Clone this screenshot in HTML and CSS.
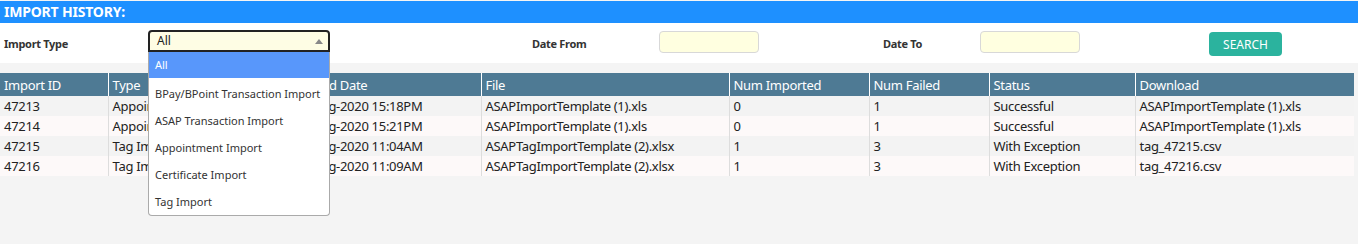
FILE: index.html
```html
<!DOCTYPE html>
<html lang="en">
<head>
  <meta charset="UTF-8">
  <meta name="viewport" content="width=device-width, initial-scale=1.0" />
  <title>Import History</title>
  <link rel="stylesheet" href="styles.css">
</head>
<body>
  <div class="panel-title">IMPORT HISTORY:</div>

  <div class="filters">
    <label class="lbl lbl-type">Import Type</label>
    <div class="select-wrap">
      <div class="select-box">
        <span>All</span>
        <span class="arrow"></span>
      </div>
      <ul class="select-list">
        <li class="active">All</li>
        <li>BPay/BPoint Transaction Import</li>
        <li>ASAP Transaction Import</li>
        <li>Appointment Import</li>
        <li>Certificate Import</li>
        <li>Tag Import</li>
      </ul>
    </div>
    <label class="lbl lbl-from">Date From</label>
    <input class="date date-from" type="text">
    <label class="lbl lbl-to">Date To</label>
    <input class="date date-to" type="text">
    <button class="btn-search">SEARCH</button>
  </div>

  <table class="history">
    <colgroup>
      <col style="width:108px">
      <col style="width:182px">
      <col style="width:191px">
      <col style="width:248px">
      <col style="width:140px">
      <col style="width:120px">
      <col style="width:146px">
      <col style="width:219px">
    </colgroup>
    <thead>
      <tr>
        <th>Import ID</th>
        <th>Type</th>
        <th>Upload Date</th>
        <th>File</th>
        <th>Num Imported</th>
        <th>Num Failed</th>
        <th>Status</th>
        <th>Download</th>
      </tr>
    </thead>
    <tbody>
      <tr>
        <td>47213</td>
        <td>Appointment Import</td>
        <td>13-Aug-2020 15:18PM</td>
        <td>ASAPImportTemplate (1).xls</td>
        <td>0</td>
        <td>1</td>
        <td>Successful</td>
        <td>ASAPImportTemplate (1).xls</td>
      </tr>
      <tr>
        <td>47214</td>
        <td>Appointment Import</td>
        <td>13-Aug-2020 15:21PM</td>
        <td>ASAPImportTemplate (1).xls</td>
        <td>0</td>
        <td>1</td>
        <td>Successful</td>
        <td>ASAPImportTemplate (1).xls</td>
      </tr>
      <tr>
        <td>47215</td>
        <td>Tag Import</td>
        <td>14-Aug-2020 11:04AM</td>
        <td>ASAPTagImportTemplate (2).xlsx</td>
        <td>1</td>
        <td>3</td>
        <td>With Exception</td>
        <td>tag_47215.csv</td>
      </tr>
      <tr>
        <td>47216</td>
        <td>Tag Import</td>
        <td>14-Aug-2020 11:09AM</td>
        <td>ASAPTagImportTemplate (2).xlsx</td>
        <td>1</td>
        <td>3</td>
        <td>With Exception</td>
        <td>tag_47216.csv</td>
      </tr>
    </tbody>
  </table>
</body>
</html>
```

FILE: styles.css
```css
body {
  margin: 0;
  font-family: "Noto Sans", "Open Sans", Arial, sans-serif;
  background: #f4f4f4;
  color: #222;
  height: 244px;
  overflow: hidden;
}

.panel-title {
  margin-top: 1px;
  height: 22px;
  line-height: 22px;
  background: #1e90ff;
  color: white;
  font-weight: bold;
  font-size: 14px;
  letter-spacing: -0.2px;
  padding-left: 4px;
}

.filters {
  display: grid;
  grid-template-columns: 148px 182px 202px 127px 100px 124px 97px 100px 129px 73px;
  height: 40px;
  background: white;
  align-items: start;
}

.lbl {
  font-size: 11px;
  font-weight: bold;
  letter-spacing: -0.3px;
  color: #333;
  margin-top: 13px;
}

.lbl-type {
  grid-column: 1;
  padding-left: 4px;
}

.lbl-from {
  grid-column: 4;
}

.lbl-to {
  grid-column: 7;
}

.select-wrap {
  grid-column: 2;
  position: relative;
  margin-top: 7px;
}

.select-box {
  box-sizing: border-box;
  height: 22px;
  border: 2px solid #222;
  border-radius: 4px 4px 0 0;
  background: #fefde4;
  font-size: 12px;
  padding-left: 7px;
  line-height: 18px;
  display: flex;
  justify-content: space-between;
  align-items: center;
}

.arrow {
  width: 0;
  height: 0;
  border-left: 4px solid transparent;
  border-right: 4px solid transparent;
  border-bottom: 5px solid #888;
  margin-right: 5px;
}

.select-list {
  position: absolute;
  top: 22px;
  left: 0;
  width: 182px;
  box-sizing: border-box;
  margin: 0;
  padding: 0 0 2px;
  list-style: none;
  background: white;
  border: 1px solid #aaa;
  border-top: none;
  border-radius: 0 0 4px 4px;
  z-index: 5;
}

.select-list li {
  height: 25px;
  padding-top: 2px;
  line-height: 27px;
  font-size: 11px;
  color: #333;
  padding-left: 6px;
}

.select-list li.active {
  background: #5897fb;
  color: white;
  height: 26px;
  padding-top: 0;
  line-height: 26px;
}

.date {
  box-sizing: border-box;
  height: 22px;
  margin-top: 8px;
  border: 1px solid #d8d8d8;
  border-radius: 4px;
  background: #ffffe0;
}

.date-from {
  grid-column: 5;
}

.date-to {
  grid-column: 8;
}

.btn-search {
  grid-column: 10;
  height: 24px;
  margin-top: 9px;
  background: #2bb39e;
  color: white;
  border: none;
  border-radius: 4px;
  font-family: inherit;
  font-size: 12px;
  padding: 0;
  cursor: pointer;
}

.history {
  margin-top: 10px;
  width: 1354px;
  table-layout: fixed;
  border-collapse: collapse;
  font-size: 13px;
  letter-spacing: -0.3px;
}

.history th {
  background: #4e7a94;
  color: white;
  font-weight: normal;
  text-align: left;
  height: 23px;
  padding: 0 4px;
  border-left: 1px solid white;
  white-space: nowrap;
  overflow: hidden;
}

.history td {
  height: 20px;
  padding: 0 4px;
  border-left: 1px solid #ddd;
  white-space: nowrap;
  overflow: hidden;
}

.history th:first-child,
.history td:first-child {
  border-left: none;
}

.history tbody tr:nth-child(odd) {
  background: #f3f3f3;
}

.history tbody tr:nth-child(even) {
  background: #fdf9f9;
}
```
